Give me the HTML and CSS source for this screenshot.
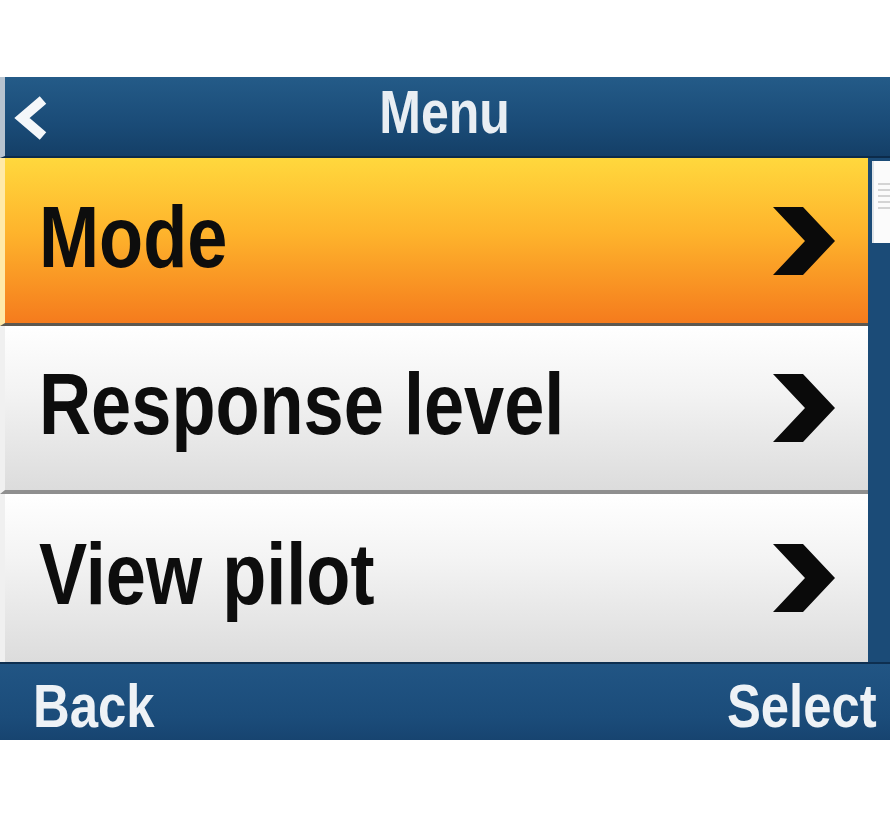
FILE: index.html
```html
<!DOCTYPE html>
<html>

<head>
    <title>Pilot Menu</title>
    <link rel="stylesheet" href="styles.css">
</head>

<body>
    <div class="screen">
        <header class="title-bar">
            <span class="back-arrow">
                <svg width="36" height="46" viewBox="0 0 36 46">
                    <polyline points="30,5 9,23 30,41" fill="none" stroke="#f4f7fa" stroke-width="10" stroke-linejoin="miter"/>
                </svg>
            </span>
            <h1>Menu</h1>
            <span></span>
        </header>

        <div class="content">
            <ul class="menu">
                <li class="menu-item selected">
                    <span class="label">Mode</span>
                    <svg class="chevron" width="62" height="68" viewBox="0 0 62 68">
                        <polygon points="0,0 30,0 62,34 30,68 0,68 32,34"/>
                    </svg>
                </li>
                <li class="menu-item">
                    <span class="label">Response level</span>
                    <svg class="chevron" width="62" height="68" viewBox="0 0 62 68">
                        <polygon points="0,0 30,0 62,34 30,68 0,68 32,34"/>
                    </svg>
                </li>
                <li class="menu-item">
                    <span class="label">View pilot</span>
                    <svg class="chevron" width="62" height="68" viewBox="0 0 62 68">
                        <polygon points="0,0 30,0 62,34 30,68 0,68 32,34"/>
                    </svg>
                </li>
            </ul>
            <div class="scrollbar">
                <div class="thumb"><div class="grip"></div></div>
            </div>
        </div>

        <footer class="soft-keys">
            <span class="key-left">Back</span>
            <span class="key-right">Select</span>
        </footer>
    </div>
</body>

</html>
```

FILE: styles.css
```css
body {
    margin: 0;
    background: #ffffff;
    font-family: "Liberation Sans", Arial, sans-serif;
    font-weight: bold;
}

/* the device font is a narrow grotesque, so squeeze the text sideways */
.title-bar h1,
.label,
.soft-keys span {
    display: inline-block;
    transform: scaleX(0.82);
}

.screen {
    margin-top: 77px;
    width: 890px;
}

.title-bar {
    height: 81px;
    box-sizing: border-box;
    display: grid;
    grid-template-columns: 1fr auto 1fr;
    align-items: center;
    background: linear-gradient(#245b88, #1a4b77 60%, #143f67);
    border-left: 5px solid #b7c3cf;
    border-bottom: 2px solid #0c2b4a;
}

.back-arrow {
    display: flex;
    padding-left: 8px;
    padding-top: 2px;
}

.title-bar h1 {
    margin: 0 0 0 -5px;
    font-size: 61px;
    line-height: 68px;
    color: #e9eef3;
    padding-bottom: 10px;
}

.content {
    display: flex;
    height: 504px;
    background: #1b4b77;
}

.menu {
    list-style: none;
    margin: 0;
    padding: 0;
    flex: 1;
}

.menu-item {
    height: 168px;
    box-sizing: border-box;
    display: flex;
    align-items: center;
    justify-content: space-between;
    padding: 0 33px 0 34px;
    background: linear-gradient(#ffffff, #f3f3f3 40%, #dcdcdc);
    border-left: 5px solid #f0f0f0;
    border-bottom: 4px solid #8f8f8f;
}

.menu-item.selected {
    background: linear-gradient(#ffd83d, #feb42c 45%, #f57b1d);
    border-left-color: #ffe9a8;
    border-bottom: 3px solid #5d5850;
}

.menu-item:last-child {
    border-bottom: none;
}

.label {
    font-size: 88px;
    line-height: 1;
    color: #0d0d0d;
    padding-bottom: 8px;
    transform-origin: left center;
}

.chevron {
    fill: #0a0a0a;
}

.scrollbar {
    width: 22px;
    padding: 3px 0 0 4px;
    box-sizing: border-box;
}

.thumb {
    height: 82px;
    background: #fbfbfb;
    border-left: 2px solid #dfe4e8;
    padding-top: 22px;
    box-sizing: border-box;
}

.grip {
    margin-left: 4px;
    height: 28px;
    background: repeating-linear-gradient(#d4d4d4 0 2px, transparent 2px 6px);
}

.soft-keys {
    height: 78px;
    box-sizing: border-box;
    display: flex;
    justify-content: space-between;
    padding: 8px 13px 0 33px;
    background: linear-gradient(#215584, #1b4c7a 70%, #174470);
    border-top: 2px solid #0e2f50;
    font-size: 62px;
    line-height: 68px;
    color: #eef2f6;
}

.key-left {
    transform-origin: left center;
}

.key-right {
    transform-origin: right center;
}
```
